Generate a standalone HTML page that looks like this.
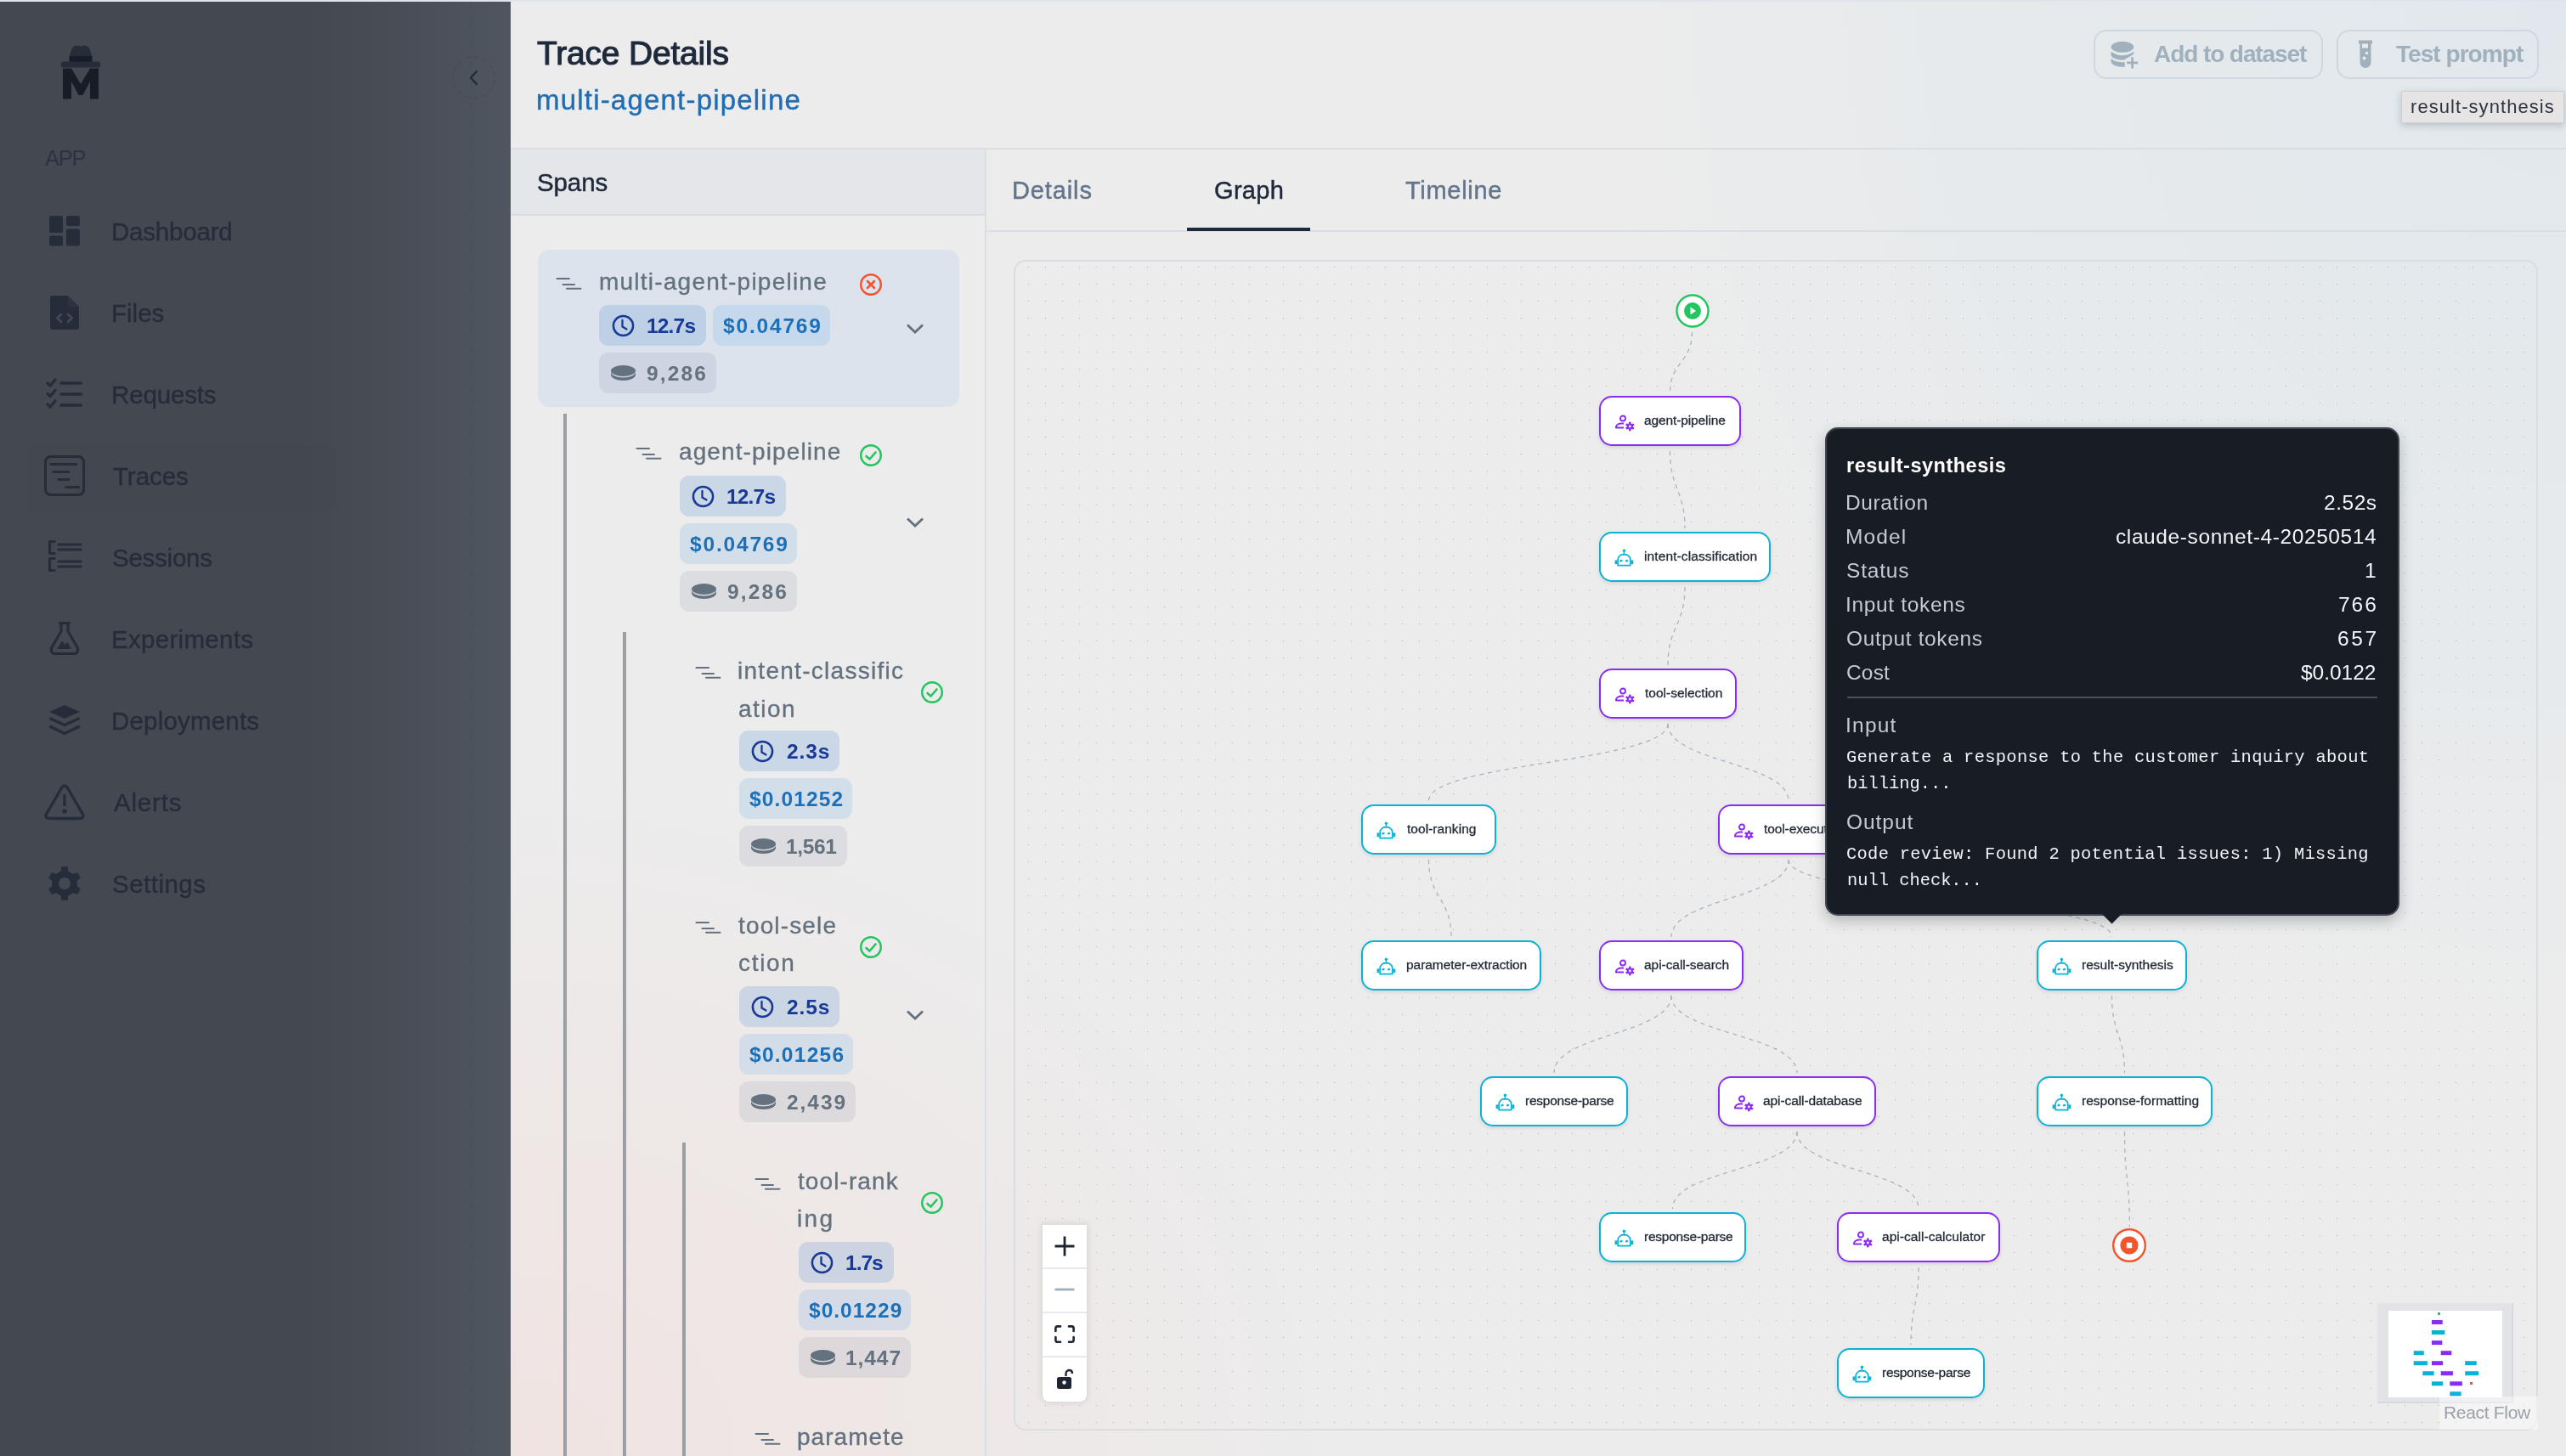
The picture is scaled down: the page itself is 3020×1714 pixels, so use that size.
<!DOCTYPE html>
<html><head><meta charset="utf-8"><title>Trace Details</title>
<style>
html,body{margin:0;padding:0;}
body{width:3020px;height:1714px;overflow:hidden;position:relative;background:#ececec;
font-family:"Liberation Sans",sans-serif;}
.t{position:absolute;white-space:nowrap;will-change:transform;}
.b{position:absolute;box-sizing:border-box;}
svg.b{overflow:visible;}
</style></head><body>

<div class="b" style="left:601px;top:0px;width:2419px;height:1714px;background:radial-gradient(ellipse 1000px 800px at 0% 100%,rgba(241,226,224,0.85),rgba(241,226,224,0) 100%),radial-gradient(ellipse 1150px 1250px at 100% 0%,rgba(225,232,237,1) 0%,rgba(225,232,237,0.55) 55%,rgba(225,232,237,0) 100%),#ececec;"></div>
<div class="b" style="left:0px;top:0px;width:3020px;height:2px;background:#dfe4ec;"></div>
<div class="b" style="left:0px;top:2px;width:601px;height:1712px;background:linear-gradient(to right,#434851 0px,#434851 360px,#474c55 450px,#4c525b 540px,#50565f 601px);"></div>
<div class="b" style="left:554px;top:2px;width:2px;height:1712px;background:repeating-linear-gradient(to bottom,rgba(40,46,56,0.09) 0 6px,transparent 6px 12px);"></div>
<div class="b" style="left:532px;top:66px;width:51px;height:51px;border:2px dashed rgba(40,46,56,0.12);border-radius:50%;"></div>
<svg class="b" style="left:550px;top:82px;" width="14" height="20" viewBox="0 0 14 20"><path d="M11 2 L4 9.5 L11 17" fill="none" stroke="#232b37" stroke-width="2.4" stroke-linecap="round" stroke-linejoin="round"/></svg>
<svg class="b" style="left:70px;top:52px;" width="50" height="66" viewBox="0 0 50 66"><path d="M12 21 C12 10 14 1.5 20.5 1.5 C23.5 1.5 24 2.8 25 2.8 C26 2.8 26.5 1.5 29.5 1.5 C36 1.5 38 10 38 21 Z" fill="#252d3a"/><rect x="11.5" y="14" width="27" height="7" fill="#161d27"/><path d="M4 20.5 L46 20.5 C49 20.5 49 27.5 46 27.5 L4 27.5 C1 27.5 1 20.5 4 20.5 Z" fill="#252d3a"/><path d="M4 28.5 L14 28.5 L25 47 L36 28.5 L46 28.5 L46 64.5 L36 64.5 L36 44 L27.5 60 L22.5 60 L14 44 L14 64.5 L4 64.5 Z" fill="#161d27"/></svg>
<div class="t" style="top:171.1px;font-size:25.5px;line-height:31px;color:#2b3340;letter-spacing:-1.21px;left:52.7px;">APP</div>
<div class="b" style="left:33px;top:523px;width:361px;height:80px;background:rgba(30,36,46,0.025);border-radius:12px;"></div>
<div class="t" style="top:254.6px;font-size:29.5px;line-height:35px;color:#252d3a;-webkit-text-stroke:0.35px #252d3a;letter-spacing:-0.20px;left:131.1px;">Dashboard</div>
<div class="t" style="top:350.6px;font-size:29.5px;line-height:35px;color:#252d3a;-webkit-text-stroke:0.35px #252d3a;letter-spacing:0.02px;left:131.1px;">Files</div>
<div class="t" style="top:446.6px;font-size:29.5px;line-height:35px;color:#252d3a;-webkit-text-stroke:0.35px #252d3a;letter-spacing:-0.16px;left:131.1px;">Requests</div>
<div class="t" style="top:542.6px;font-size:29.5px;line-height:35px;color:#252d3a;-webkit-text-stroke:0.35px #252d3a;letter-spacing:-0.06px;left:132.9px;">Traces</div>
<div class="t" style="top:638.6px;font-size:29.5px;line-height:35px;color:#252d3a;-webkit-text-stroke:0.35px #252d3a;letter-spacing:-0.25px;left:132.2px;">Sessions</div>
<div class="t" style="top:734.6px;font-size:29.5px;line-height:35px;color:#252d3a;-webkit-text-stroke:0.35px #252d3a;letter-spacing:0.30px;left:131.1px;">Experiments</div>
<div class="t" style="top:830.6px;font-size:29.5px;line-height:35px;color:#252d3a;-webkit-text-stroke:0.35px #252d3a;letter-spacing:0.19px;left:131.1px;">Deployments</div>
<div class="t" style="top:926.6px;font-size:29.5px;line-height:35px;color:#252d3a;-webkit-text-stroke:0.35px #252d3a;letter-spacing:0.80px;left:133.5px;">Alerts</div>
<div class="t" style="top:1022.6px;font-size:29.5px;line-height:35px;color:#252d3a;-webkit-text-stroke:0.35px #252d3a;letter-spacing:0.48px;left:132.2px;">Settings</div>
<svg class="b" style="left:57px;top:253px;" width="38" height="38" viewBox="0 0 38 38"><rect x="1" y="1" width="16" height="20" rx="2.5" fill="#252d3a"/><rect x="1" y="24.5" width="16" height="12" rx="2.5" fill="#252d3a"/><rect x="21" y="1" width="16" height="12" rx="2.5" fill="#252d3a"/><rect x="21" y="16.5" width="16" height="20" rx="2.5" fill="#252d3a"/></svg>
<svg class="b" style="left:58px;top:347px;" width="36" height="42" viewBox="0 0 36 42"><path d="M3 1 L22 1 L35 14 L35 38 C35 40 34 41 32 41 L4 41 C2 41 1 40 1 38 L1 4 C1 2 2 1 3 1 Z" fill="#252d3a"/><path d="M22 1 L22 14 L35 14" fill="#3c424b" opacity="0.35"/><path d="M14 23 L9.5 27.5 L14 32 M22 23 L26.5 27.5 L22 32" fill="none" stroke="#444951" stroke-width="2.6" stroke-linecap="round" stroke-linejoin="round"/></svg>
<svg class="b" style="left:54px;top:445px;" width="44" height="37" viewBox="0 0 44 37"><path d="M2 6 L5 9 L11 2 M2 18.5 L5 21.5 L11 14.5 M2 31 L5 34 L11 27" fill="none" stroke="#252d3a" stroke-width="3.4" stroke-linecap="round" stroke-linejoin="round"/><path d="M18 6 L41 6 M18 19 L41 19 M18 32 L41 32" stroke="#252d3a" stroke-width="3.6" stroke-linecap="round"/></svg>
<svg class="b" style="left:51px;top:535px;" width="50" height="50" viewBox="0 0 50 50"><rect x="2.5" y="2.5" width="45" height="45" rx="6" fill="none" stroke="#252d3a" stroke-width="3"/><path d="M7.5 11.5 L40 11.5 M10.5 20.5 L31 20.5 M16.5 29.5 L31 29.5 M25.5 38.5 L43 38.5" stroke="#252d3a" stroke-width="2.8"/></svg>
<svg class="b" style="left:55px;top:635px;" width="42" height="40" viewBox="0 0 42 40"><path d="M9 2.5 L3.5 2.5 L3.5 16.5 L9 16.5 M9 22.5 L3.5 22.5 L3.5 36.5 L9 36.5" fill="none" stroke="#252d3a" stroke-width="3.2" stroke-linecap="round" stroke-linejoin="round"/><path d="M14 6 L40 6 M14 12 L40 12 M14 26 L40 26 M14 32 L40 32" stroke="#252d3a" stroke-width="3.2" stroke-linecap="round"/></svg>
<svg class="b" style="left:57px;top:731px;" width="38" height="42" viewBox="0 0 38 42"><path d="M13.5 2.5 L24.5 2.5 M15 2.5 L15 12 L4 31 C2.5 34 3.5 38.5 8 38.5 L30 38.5 C34.5 38.5 35.5 34 34 31 L23 12 L23 2.5" fill="none" stroke="#252d3a" stroke-width="3.2" stroke-linecap="round" stroke-linejoin="round"/><path d="M10 33 L16 23.5 L19.5 28 L22 25 L27 33 Z" fill="#252d3a"/></svg>
<svg class="b" style="left:57px;top:829px;" width="38" height="38" viewBox="0 0 38 38"><path d="M19 1 L37 9 L19 17 L1 9 Z" fill="#252d3a"/><path d="M2.5 17 L19 24.5 L35.5 17" fill="none" stroke="#252d3a" stroke-width="3.4" stroke-linecap="round" stroke-linejoin="round"/><path d="M2.5 26.5 L19 34.5 L35.5 26.5" fill="none" stroke="#252d3a" stroke-width="3.4" stroke-linecap="round" stroke-linejoin="round"/></svg>
<svg class="b" style="left:51px;top:922px;" width="50" height="44" viewBox="0 0 50 44"><path d="M25 3 C23.5 3 22.5 4 21.5 5.5 L3.5 36.5 C2 39 3.5 41.5 6.5 41.5 L43.5 41.5 C46.5 41.5 48 39 46.5 36.5 L28.5 5.5 C27.5 4 26.5 3 25 3 Z" fill="none" stroke="#252d3a" stroke-width="3.4" stroke-linejoin="round"/><path d="M25 13 L25 27" stroke="#252d3a" stroke-width="3.4"/><circle cx="25" cy="33" r="2.6" fill="#252d3a"/></svg>
<svg class="b" style="left:56px;top:1020px;" width="40" height="40" viewBox="0 0 40 40"><polygon points="15.61,5.66 16.18,0.37 23.82,0.37 24.39,5.66 30.23,9.03 35.09,6.88 38.91,13.49 34.62,16.63 34.62,23.37 38.91,26.51 35.09,33.12 30.23,30.97 24.39,34.34 23.82,39.63 16.18,39.63 15.61,34.34 9.77,30.97 4.91,33.12 1.09,26.51 5.38,23.37 5.38,16.63 1.09,13.49 4.91,6.88 9.77,9.03" fill="#252d3a"/><circle cx="20" cy="20" r="14.5" fill="#252d3a"/><circle cx="20" cy="20" r="7" fill="#444951"/></svg>
<div class="t" style="top:38.6px;font-size:39px;line-height:47px;color:#1e293b;-webkit-text-stroke:1.1px #1e293b;letter-spacing:-0.19px;left:632.2px;">Trace Details</div>
<div class="t" style="top:98.3px;font-size:33px;line-height:40px;color:#1f6db4;-webkit-text-stroke:0.4px #1f6db4;letter-spacing:1.20px;left:630.9px;">multi-agent-pipeline</div>
<div class="b" style="left:2464px;top:35px;width:270px;height:58px;border:2px solid #cfd7e0;border-radius:15px;"></div>
<div class="b" style="left:2750px;top:35px;width:238px;height:58px;border:2px solid #cfd7e0;border-radius:15px;"></div>
<svg class="b" style="left:2483px;top:47px;" width="36" height="36" viewBox="0 0 36 36"><ellipse cx="14.9" cy="8.3" rx="13.3" ry="6.5" fill="#a1b0bd"/><path d="M1.6 13.8 Q14.9 22.8 28.2 13.8 L28.2 16.8 L18 22.8 C17 23.4 16 23.6 14.9 23.6 C7.5 23.6 1.6 20.8 1.6 17.5 Z" fill="#a1b0bd"/><path d="M1.6 21.8 C4 24.6 9 26 14 26.2 L17.8 26.3 L17.8 31.7 L14 31.7 C7 31.4 1.6 28.8 1.6 25.6 Z" fill="#a1b0bd"/><path d="M26.6 20.2 L26.6 33.6 M20.1 26.8 L33.2 26.8" stroke="#a1b0bd" stroke-width="2.7"/></svg>
<svg class="b" style="left:2774px;top:46px;" width="20" height="36" viewBox="0 0 20 36"><path d="M2 1.5 L18 1.5 L18 5.5 L16.5 5.5 L16.5 27 C16.5 31 13.5 34 10 34 C6.5 34 3.5 31 3.5 27 L3.5 5.5 L2 5.5 Z" fill="#a1b0bd"/><rect x="6" y="5.5" width="7" height="5" fill="#e8ecee"/><circle cx="11.5" cy="16.5" r="1.8" fill="#e8ecee"/><circle cx="8.5" cy="22.5" r="2" fill="#e8ecee"/></svg>
<div class="t" style="top:46.5px;font-size:28px;line-height:34px;color:#a1b0bd;font-weight:700;letter-spacing:-1.08px;left:2535.0px;">Add to dataset</div>
<div class="t" style="top:46.5px;font-size:28px;line-height:34px;color:#a1b0bd;font-weight:700;letter-spacing:-0.95px;left:2819.7px;">Test prompt</div>
<div class="b" style="left:2826px;top:107px;width:192px;height:38px;background:#e6e4e4;border:1px solid #cfcfd2;box-shadow:0 3px 8px rgba(40,50,70,0.22);"></div>
<div class="t" style="top:113.1px;font-size:22px;line-height:26px;color:#2d3540;letter-spacing:1.06px;left:2837.1px;">result-synthesis</div>
<div class="b" style="left:601px;top:174px;width:2419px;height:2px;background:#dadde2;"></div>
<div class="b" style="left:601px;top:176px;width:559px;height:77px;background:#e5e6e9;"></div>
<div class="b" style="left:601px;top:252px;width:559px;height:2px;background:#d9dde3;"></div>
<div class="b" style="left:1159px;top:175px;width:2px;height:1539px;background:#d9dee4;"></div>
<div class="t" style="top:197.0px;font-size:29.5px;line-height:35px;color:#1e293b;-webkit-text-stroke:0.5px #1e293b;letter-spacing:-0.12px;left:631.7px;">Spans</div>
<div class="b" style="left:633px;top:294px;width:496px;height:185px;background:#dde3ec;border-radius:14px;"></div>
<div class="b" style="left:663px;top:487px;width:4px;height:1227px;background:#9b9ea3;"></div>
<div class="b" style="left:733px;top:744px;width:4px;height:970px;background:#9b9ea3;"></div>
<div class="b" style="left:803px;top:1345px;width:4px;height:369px;background:#9b9ea3;"></div>
<svg class="b" style="left:655px;top:326.0px;" width="30" height="16" viewBox="0 0 30 16"><path d="M0.5 2 L15 2 M7.5 9 L21 9 M12 13.7 L28.5 13.7" stroke="#64717e" stroke-width="2" stroke-linecap="round"/></svg>
<div class="t" style="top:314.8px;font-size:28px;line-height:34px;color:#64717e;-webkit-text-stroke:0.35px #64717e;letter-spacing:1.23px;left:704.5px;">multi-agent-pipeline</div>
<svg class="b" style="left:1012px;top:322px;" width="26" height="26" viewBox="0 0 26 26"><circle cx="13" cy="13" r="11.8" fill="none" stroke="#f4532e" stroke-width="2.4"/><path d="M9 9 L17 17 M17 9 L9 17" stroke="#f4532e" stroke-width="2.6" stroke-linecap="round"/></svg>
<div class="b" style="left:705px;top:359px;width:125.5px;height:48px;background:rgba(71,136,211,0.2);border-radius:11px;"></div>
<svg class="b" style="left:719.5px;top:369.5px;" width="27" height="27" viewBox="0 0 27 27"><circle cx="13.5" cy="13.5" r="11.6" fill="none" stroke="#183a96" stroke-width="2.5"/><path d="M12.5 7 L12.5 14.5 L17.5 17.5" fill="none" stroke="#183a96" stroke-width="2.3" stroke-linecap="round"/></svg>
<div class="t" style="top:368.7px;font-size:24.5px;line-height:29px;color:#183a96;font-weight:700;letter-spacing:-0.82px;left:760.5px;">12.7s</div>
<div class="b" style="left:839px;top:359px;width:138.39999999999998px;height:48px;background:rgba(69,156,236,0.15);border-radius:11px;"></div>
<div class="t" style="top:368.7px;font-size:24.5px;line-height:29px;color:#1d70b8;font-weight:700;letter-spacing:1.82px;left:851.3px;">$0.04769</div>
<div class="b" style="left:705px;top:415px;width:138px;height:48px;background:rgba(76,86,126,0.1);border-radius:11px;"></div>
<svg class="b" style="left:718px;top:429px;" width="31" height="20" viewBox="0 0 31 20"><ellipse cx="15.5" cy="7.5" rx="14.5" ry="6.5" fill="#64717e"/><path d="M1 8.5 L1 12 C1 16 7.5 19 15.5 19 C23.5 19 30 16 30 12 L30 8.5 C30 12.5 23.5 15.5 15.5 15.5 C7.5 15.5 1 12.5 1 8.5 Z" fill="#64717e"/></svg>
<div class="t" style="top:425.0px;font-size:24.5px;line-height:29px;color:#64717e;font-weight:700;letter-spacing:2.12px;left:761.1px;">9,286</div>
<svg class="b" style="left:1066px;top:379.5px;" width="22" height="14" viewBox="0 0 22 14"><path d="M2 2.5 L11 11 L20 2.5" fill="none" stroke="#64707c" stroke-width="2.8"/></svg>
<svg class="b" style="left:748.5px;top:526.2px;" width="30" height="16" viewBox="0 0 30 16"><path d="M0.5 2 L15 2 M7.5 9 L21 9 M12 13.7 L28.5 13.7" stroke="#64717e" stroke-width="2" stroke-linecap="round"/></svg>
<div class="t" style="top:515.0px;font-size:28px;line-height:34px;color:#64717e;-webkit-text-stroke:0.35px #64717e;letter-spacing:1.11px;left:798.5px;">agent-pipeline</div>
<svg class="b" style="left:1012px;top:522.8px;" width="26" height="26" viewBox="0 0 26 26"><circle cx="13" cy="13" r="11.8" fill="none" stroke="#22c55e" stroke-width="2.4"/><path d="M7.5 14 L11.5 17.5 L18.5 9.5" fill="none" stroke="#22c55e" stroke-width="2.6" stroke-linecap="round" stroke-linejoin="round"/></svg>
<div class="b" style="left:799.6px;top:560px;width:125.5px;height:48px;background:rgba(71,136,211,0.2);border-radius:11px;"></div>
<svg class="b" style="left:814.1px;top:570.5px;" width="27" height="27" viewBox="0 0 27 27"><circle cx="13.5" cy="13.5" r="11.6" fill="none" stroke="#183a96" stroke-width="2.5"/><path d="M12.5 7 L12.5 14.5 L17.5 17.5" fill="none" stroke="#183a96" stroke-width="2.3" stroke-linecap="round"/></svg>
<div class="t" style="top:569.7px;font-size:24.5px;line-height:29px;color:#183a96;font-weight:700;letter-spacing:-0.82px;left:855.1px;">12.7s</div>
<div class="b" style="left:799.6px;top:616px;width:138.39999999999998px;height:48px;background:rgba(69,156,236,0.15);border-radius:11px;"></div>
<div class="t" style="top:625.7px;font-size:24.5px;line-height:29px;color:#1d70b8;font-weight:700;letter-spacing:1.82px;left:811.9px;">$0.04769</div>
<div class="b" style="left:799.6px;top:672px;width:138.0px;height:48px;background:rgba(76,86,126,0.1);border-radius:11px;"></div>
<svg class="b" style="left:812.6px;top:686px;" width="31" height="20" viewBox="0 0 31 20"><ellipse cx="15.5" cy="7.5" rx="14.5" ry="6.5" fill="#64717e"/><path d="M1 8.5 L1 12 C1 16 7.5 19 15.5 19 C23.5 19 30 16 30 12 L30 8.5 C30 12.5 23.5 15.5 15.5 15.5 C7.5 15.5 1 12.5 1 8.5 Z" fill="#64717e"/></svg>
<div class="t" style="top:682.0px;font-size:24.5px;line-height:29px;color:#64717e;font-weight:700;letter-spacing:2.12px;left:855.7px;">9,286</div>
<svg class="b" style="left:1066px;top:608.3px;" width="22" height="14" viewBox="0 0 22 14"><path d="M2 2.5 L11 11 L20 2.5" fill="none" stroke="#64707c" stroke-width="2.8"/></svg>
<svg class="b" style="left:818.5px;top:784.3px;" width="30" height="16" viewBox="0 0 30 16"><path d="M0.5 2 L15 2 M7.5 9 L21 9 M12 13.7 L28.5 13.7" stroke="#64717e" stroke-width="2" stroke-linecap="round"/></svg>
<div class="t" style="top:773.1px;font-size:28px;line-height:34px;color:#64717e;-webkit-text-stroke:0.35px #64717e;letter-spacing:1.28px;left:867.8px;">intent-classific</div>
<div class="t" style="top:817.6px;font-size:28px;line-height:34px;color:#64717e;-webkit-text-stroke:0.35px #64717e;letter-spacing:1.47px;left:868.5px;">ation</div>
<svg class="b" style="left:1084px;top:802px;" width="26" height="26" viewBox="0 0 26 26"><circle cx="13" cy="13" r="11.8" fill="none" stroke="#22c55e" stroke-width="2.4"/><path d="M7.5 14 L11.5 17.5 L18.5 9.5" fill="none" stroke="#22c55e" stroke-width="2.6" stroke-linecap="round" stroke-linejoin="round"/></svg>
<div class="b" style="left:869.6px;top:860px;width:118.39999999999998px;height:48px;background:rgba(71,136,211,0.2);border-radius:11px;"></div>
<svg class="b" style="left:884.1px;top:870.5px;" width="27" height="27" viewBox="0 0 27 27"><circle cx="13.5" cy="13.5" r="11.6" fill="none" stroke="#183a96" stroke-width="2.5"/><path d="M12.5 7 L12.5 14.5 L17.5 17.5" fill="none" stroke="#183a96" stroke-width="2.3" stroke-linecap="round"/></svg>
<div class="t" style="top:869.7px;font-size:24.5px;line-height:29px;color:#183a96;font-weight:700;letter-spacing:0.86px;left:925.7px;">2.3s</div>
<div class="b" style="left:869.6px;top:916px;width:133.5px;height:48px;background:rgba(69,156,236,0.15);border-radius:11px;"></div>
<div class="t" style="top:925.7px;font-size:24.5px;line-height:29px;color:#1d70b8;font-weight:700;letter-spacing:1.14px;left:881.9px;">$0.01252</div>
<div class="b" style="left:869.6px;top:972px;width:127.70000000000005px;height:48px;background:rgba(76,86,126,0.1);border-radius:11px;"></div>
<svg class="b" style="left:882.6px;top:986px;" width="31" height="20" viewBox="0 0 31 20"><ellipse cx="15.5" cy="7.5" rx="14.5" ry="6.5" fill="#64717e"/><path d="M1 8.5 L1 12 C1 16 7.5 19 15.5 19 C23.5 19 30 16 30 12 L30 8.5 C30 12.5 23.5 15.5 15.5 15.5 C7.5 15.5 1 12.5 1 8.5 Z" fill="#64717e"/></svg>
<div class="t" style="top:982.0px;font-size:24.5px;line-height:29px;color:#64717e;font-weight:700;letter-spacing:-0.37px;left:925.1px;">1,561</div>
<svg class="b" style="left:818.5px;top:1084.2px;" width="30" height="16" viewBox="0 0 30 16"><path d="M0.5 2 L15 2 M7.5 9 L21 9 M12 13.7 L28.5 13.7" stroke="#64717e" stroke-width="2" stroke-linecap="round"/></svg>
<div class="t" style="top:1073.0px;font-size:28px;line-height:34px;color:#64717e;-webkit-text-stroke:0.35px #64717e;letter-spacing:1.15px;left:869.2px;">tool-sele</div>
<div class="t" style="top:1116.8px;font-size:28px;line-height:34px;color:#64717e;-webkit-text-stroke:0.35px #64717e;letter-spacing:1.70px;left:868.5px;">ction</div>
<svg class="b" style="left:1012px;top:1102px;" width="26" height="26" viewBox="0 0 26 26"><circle cx="13" cy="13" r="11.8" fill="none" stroke="#22c55e" stroke-width="2.4"/><path d="M7.5 14 L11.5 17.5 L18.5 9.5" fill="none" stroke="#22c55e" stroke-width="2.6" stroke-linecap="round" stroke-linejoin="round"/></svg>
<div class="b" style="left:869.6px;top:1161px;width:118.39999999999998px;height:48px;background:rgba(71,136,211,0.2);border-radius:11px;"></div>
<svg class="b" style="left:884.1px;top:1171.5px;" width="27" height="27" viewBox="0 0 27 27"><circle cx="13.5" cy="13.5" r="11.6" fill="none" stroke="#183a96" stroke-width="2.5"/><path d="M12.5 7 L12.5 14.5 L17.5 17.5" fill="none" stroke="#183a96" stroke-width="2.3" stroke-linecap="round"/></svg>
<div class="t" style="top:1170.7px;font-size:24.5px;line-height:29px;color:#183a96;font-weight:700;letter-spacing:0.86px;left:925.7px;">2.5s</div>
<div class="b" style="left:869.6px;top:1217px;width:134.5px;height:48px;background:rgba(69,156,236,0.15);border-radius:11px;"></div>
<div class="t" style="top:1226.7px;font-size:24.5px;line-height:29px;color:#1d70b8;font-weight:700;letter-spacing:1.27px;left:881.9px;">$0.01256</div>
<div class="b" style="left:869.6px;top:1273px;width:137.39999999999998px;height:48px;background:rgba(76,86,126,0.1);border-radius:11px;"></div>
<svg class="b" style="left:882.6px;top:1287px;" width="31" height="20" viewBox="0 0 31 20"><ellipse cx="15.5" cy="7.5" rx="14.5" ry="6.5" fill="#64717e"/><path d="M1 8.5 L1 12 C1 16 7.5 19 15.5 19 C23.5 19 30 16 30 12 L30 8.5 C30 12.5 23.5 15.5 15.5 15.5 C7.5 15.5 1 12.5 1 8.5 Z" fill="#64717e"/></svg>
<div class="t" style="top:1283.0px;font-size:24.5px;line-height:29px;color:#64717e;font-weight:700;letter-spacing:1.97px;left:925.7px;">2,439</div>
<svg class="b" style="left:1066px;top:1188px;" width="22" height="14" viewBox="0 0 22 14"><path d="M2 2.5 L11 11 L20 2.5" fill="none" stroke="#64707c" stroke-width="2.8"/></svg>
<svg class="b" style="left:888.8px;top:1385.5px;" width="30" height="16" viewBox="0 0 30 16"><path d="M0.5 2 L15 2 M7.5 9 L21 9 M12 13.7 L28.5 13.7" stroke="#64717e" stroke-width="2" stroke-linecap="round"/></svg>
<div class="t" style="top:1374.3px;font-size:28px;line-height:34px;color:#64717e;-webkit-text-stroke:0.35px #64717e;letter-spacing:1.09px;left:939.3px;">tool-rank</div>
<div class="t" style="top:1418.0px;font-size:28px;line-height:34px;color:#64717e;-webkit-text-stroke:0.35px #64717e;letter-spacing:2.35px;left:937.9px;">ing</div>
<svg class="b" style="left:1084px;top:1403px;" width="26" height="26" viewBox="0 0 26 26"><circle cx="13" cy="13" r="11.8" fill="none" stroke="#22c55e" stroke-width="2.4"/><path d="M7.5 14 L11.5 17.5 L18.5 9.5" fill="none" stroke="#22c55e" stroke-width="2.6" stroke-linecap="round" stroke-linejoin="round"/></svg>
<div class="b" style="left:939.7px;top:1462px;width:112.20000000000005px;height:48px;background:rgba(71,136,211,0.2);border-radius:11px;"></div>
<svg class="b" style="left:954.2px;top:1472.5px;" width="27" height="27" viewBox="0 0 27 27"><circle cx="13.5" cy="13.5" r="11.6" fill="none" stroke="#183a96" stroke-width="2.5"/><path d="M12.5 7 L12.5 14.5 L17.5 17.5" fill="none" stroke="#183a96" stroke-width="2.3" stroke-linecap="round"/></svg>
<div class="t" style="top:1471.7px;font-size:24.5px;line-height:29px;color:#183a96;font-weight:700;letter-spacing:-1.00px;left:995.2px;">1.7s</div>
<div class="b" style="left:939.7px;top:1518px;width:132.70000000000005px;height:48px;background:rgba(69,156,236,0.15);border-radius:11px;"></div>
<div class="t" style="top:1527.7px;font-size:24.5px;line-height:29px;color:#1d70b8;font-weight:700;letter-spacing:1.01px;left:952.0px;">$0.01229</div>
<div class="b" style="left:939.7px;top:1574px;width:132.5px;height:48px;background:rgba(76,86,126,0.1);border-radius:11px;"></div>
<svg class="b" style="left:952.7px;top:1588px;" width="31" height="20" viewBox="0 0 31 20"><ellipse cx="15.5" cy="7.5" rx="14.5" ry="6.5" fill="#64717e"/><path d="M1 8.5 L1 12 C1 16 7.5 19 15.5 19 C23.5 19 30 16 30 12 L30 8.5 C30 12.5 23.5 15.5 15.5 15.5 C7.5 15.5 1 12.5 1 8.5 Z" fill="#64717e"/></svg>
<div class="t" style="top:1584.0px;font-size:24.5px;line-height:29px;color:#64717e;font-weight:700;letter-spacing:0.93px;left:995.2px;">1,447</div>
<svg class="b" style="left:888.8px;top:1685.9px;" width="30" height="16" viewBox="0 0 30 16"><path d="M0.5 2 L15 2 M7.5 9 L21 9 M12 13.7 L28.5 13.7" stroke="#64717e" stroke-width="2" stroke-linecap="round"/></svg>
<div class="t" style="top:1674.7px;font-size:28px;line-height:34px;color:#64717e;-webkit-text-stroke:0.35px #64717e;letter-spacing:1.05px;left:937.9px;">paramete</div>
<div class="t" style="top:207.4px;font-size:29px;line-height:35px;color:#64748b;-webkit-text-stroke:0.45px #64748b;letter-spacing:0.88px;left:1191.3px;">Details</div>
<div class="t" style="top:207.4px;font-size:29px;line-height:35px;color:#1e293b;-webkit-text-stroke:0.45px #1e293b;letter-spacing:0.32px;left:1429.0px;">Graph</div>
<div class="t" style="top:207.4px;font-size:29px;line-height:35px;color:#64748b;-webkit-text-stroke:0.45px #64748b;letter-spacing:0.71px;left:1654.0px;">Timeline</div>
<div class="b" style="left:1161px;top:271px;width:1859px;height:2px;background:#d9dee4;"></div>
<div class="b" style="left:1397px;top:268px;width:145px;height:4px;background:#1e293b;"></div>
<div class="b" style="left:1193px;top:306px;width:1794px;height:1378px;border:2px solid #dadee3;border-radius:14px;"></div>
<svg class="b" style="left:1195px;top:308px;" width="1790" height="1374" viewBox="0 0 1790 1374"><defs><pattern id="dots" x="-5" y="6" width="20" height="20" patternUnits="userSpaceOnUse"><rect x="-1" y="0" width="2" height="1" fill="#a9afb6"/></pattern></defs><rect x="0" y="0" width="1790" height="1374" fill="url(#dots)"/></svg>
<svg class="b" style="left:0;top:0" width="3020" height="1714"><g fill="none" stroke="#a8b4c0" stroke-width="1.3" stroke-dasharray="5 5"><path d="M1991.5 391.0 C1991.5 426.5 1965.5 426.5 1965.5 462.0"/><path d="M1965.5 531.0 C1965.5 576.5 1983.0 576.5 1983.0 622.0"/><path d="M1983.0 691.0 C1983.0 737.0 1963.0 737.0 1963.0 783.0"/><path d="M1963.0 852.0 C1963.0 897.5 1681.5 897.5 1681.5 943.0"/><path d="M1963.0 852.0 C1963.0 897.5 2105.0 897.5 2105.0 943.0"/><path d="M1681.5 1012.0 C1681.5 1057.5 1708.0 1057.5 1708.0 1103.0"/><path d="M2105.0 1012.0 C2105.0 1057.5 1967.0 1057.5 1967.0 1103.0"/><path d="M2105.0 1012.0 C2105.0 1057.5 2485.5 1057.5 2485.5 1103.0"/><path d="M1967.0 1172.0 C1967.0 1217.5 1829.0 1217.5 1829.0 1263.0"/><path d="M1967.0 1172.0 C1967.0 1217.5 2115.0 1217.5 2115.0 1263.0"/><path d="M2115.0 1332.0 C2115.0 1377.5 1968.5 1377.5 1968.5 1423.0"/><path d="M2115.0 1332.0 C2115.0 1377.5 2258.0 1377.5 2258.0 1423.0"/><path d="M2258.0 1492.0 C2258.0 1537.5 2249.0 1537.5 2249.0 1583.0"/><path d="M2485.5 1172.0 C2485.5 1217.5 2500.5 1217.5 2500.5 1263.0"/><path d="M2500.5 1332.0 C2500.5 1388.3 2506.4 1388.3 2506.4 1444.6"/></g></svg>
<div class="b" style="left:1882px;top:466px;width:167px;height:59px;background:#fff;border:2.2px solid #8b2cf5;border-radius:15px;box-shadow:0 2px 4px rgba(30,40,60,0.12);"></div>
<svg class="b" style="left:1900.5px;top:487.5px;" width="22" height="20" viewBox="0 0 22 20"><circle cx="9" cy="4.5" r="3" fill="none" stroke="#8b2cf5" stroke-width="1.9"/><path d="M10 10.5 L7.5 10.5 C4 10.5 1 12.5 1 14.5 L1 15.5 L10 15.5" fill="none" stroke="#8b2cf5" stroke-width="2" stroke-linejoin="round"/><circle cx="17.3" cy="14" r="3.5" fill="#8b2cf5"/><rect x="16" y="8.7" width="2.6" height="10.6" fill="#8b2cf5" transform="rotate(0 17.3 14)"/><rect x="16" y="8.7" width="2.6" height="10.6" fill="#8b2cf5" transform="rotate(60 17.3 14)"/><rect x="16" y="8.7" width="2.6" height="10.6" fill="#8b2cf5" transform="rotate(120 17.3 14)"/><circle cx="17.3" cy="14" r="1.4" fill="#fff"/></svg>
<div class="t" style="top:485.1px;font-size:15.5px;line-height:19px;color:#1f2733;letter-spacing:-0.12px;left:1935.4px;-webkit-text-stroke:0.3px #1f2733;">agent-pipeline</div>
<div class="b" style="left:1882px;top:626px;width:202px;height:59px;background:#fff;border:2.2px solid #0ab3d6;border-radius:15px;box-shadow:0 2px 4px rgba(30,40,60,0.12);"></div>
<svg class="b" style="left:1900px;top:645.5px;" width="22" height="21" viewBox="0 0 22 21"><circle cx="11.4" cy="2.2" r="1.7" fill="#0ab3d6"/><path d="M11.4 3 L11.4 6.6" stroke="#0ab3d6" stroke-width="1.6"/><path d="M4.1 19.6 L4.1 12.8 Q4.1 10 6.3 8.3 L8.2 6.8 L14.6 6.8 L16.5 8.3 Q18.8 10 18.8 12.8 L18.8 19.6 Z" fill="none" stroke="#0ab3d6" stroke-width="1.7" stroke-linejoin="round"/><rect x="0.6" y="13.4" width="2.8" height="4.8" fill="#0ab3d6"/><rect x="19.5" y="13.4" width="2.8" height="4.8" fill="#0ab3d6"/><ellipse cx="8" cy="14.2" rx="1.8" ry="1.25" fill="#0ab3d6" transform="rotate(-20 8 14.2)"/><ellipse cx="14.6" cy="14.2" rx="1.8" ry="1.25" fill="#0ab3d6" transform="rotate(-20 14.6 14.2)"/></svg>
<div class="t" style="top:645.1px;font-size:15.5px;line-height:19px;color:#1f2733;letter-spacing:0.11px;left:1935.0px;-webkit-text-stroke:0.3px #1f2733;">intent-classification</div>
<div class="b" style="left:1882px;top:787px;width:162px;height:59px;background:#fff;border:2.2px solid #8b2cf5;border-radius:15px;box-shadow:0 2px 4px rgba(30,40,60,0.12);"></div>
<svg class="b" style="left:1900.5px;top:808.5px;" width="22" height="20" viewBox="0 0 22 20"><circle cx="9" cy="4.5" r="3" fill="none" stroke="#8b2cf5" stroke-width="1.9"/><path d="M10 10.5 L7.5 10.5 C4 10.5 1 12.5 1 14.5 L1 15.5 L10 15.5" fill="none" stroke="#8b2cf5" stroke-width="2" stroke-linejoin="round"/><circle cx="17.3" cy="14" r="3.5" fill="#8b2cf5"/><rect x="16" y="8.7" width="2.6" height="10.6" fill="#8b2cf5" transform="rotate(0 17.3 14)"/><rect x="16" y="8.7" width="2.6" height="10.6" fill="#8b2cf5" transform="rotate(60 17.3 14)"/><rect x="16" y="8.7" width="2.6" height="10.6" fill="#8b2cf5" transform="rotate(120 17.3 14)"/><circle cx="17.3" cy="14" r="1.4" fill="#fff"/></svg>
<div class="t" style="top:806.1px;font-size:15.5px;line-height:19px;color:#1f2733;letter-spacing:0.00px;left:1935.8px;-webkit-text-stroke:0.3px #1f2733;">tool-selection</div>
<div class="b" style="left:1602px;top:947px;width:159px;height:59px;background:#fff;border:2.2px solid #0ab3d6;border-radius:15px;box-shadow:0 2px 4px rgba(30,40,60,0.12);"></div>
<svg class="b" style="left:1620px;top:966.5px;" width="22" height="21" viewBox="0 0 22 21"><circle cx="11.4" cy="2.2" r="1.7" fill="#0ab3d6"/><path d="M11.4 3 L11.4 6.6" stroke="#0ab3d6" stroke-width="1.6"/><path d="M4.1 19.6 L4.1 12.8 Q4.1 10 6.3 8.3 L8.2 6.8 L14.6 6.8 L16.5 8.3 Q18.8 10 18.8 12.8 L18.8 19.6 Z" fill="none" stroke="#0ab3d6" stroke-width="1.7" stroke-linejoin="round"/><rect x="0.6" y="13.4" width="2.8" height="4.8" fill="#0ab3d6"/><rect x="19.5" y="13.4" width="2.8" height="4.8" fill="#0ab3d6"/><ellipse cx="8" cy="14.2" rx="1.8" ry="1.25" fill="#0ab3d6" transform="rotate(-20 8 14.2)"/><ellipse cx="14.6" cy="14.2" rx="1.8" ry="1.25" fill="#0ab3d6" transform="rotate(-20 14.6 14.2)"/></svg>
<div class="t" style="top:966.1px;font-size:15.5px;line-height:19px;color:#1f2733;letter-spacing:0.04px;left:1655.8px;-webkit-text-stroke:0.3px #1f2733;">tool-ranking</div>
<div class="b" style="left:2022px;top:947px;width:166px;height:59px;background:#fff;border:2.2px solid #8b2cf5;border-radius:15px;box-shadow:0 2px 4px rgba(30,40,60,0.12);"></div>
<svg class="b" style="left:2040.5px;top:968.5px;" width="22" height="20" viewBox="0 0 22 20"><circle cx="9" cy="4.5" r="3" fill="none" stroke="#8b2cf5" stroke-width="1.9"/><path d="M10 10.5 L7.5 10.5 C4 10.5 1 12.5 1 14.5 L1 15.5 L10 15.5" fill="none" stroke="#8b2cf5" stroke-width="2" stroke-linejoin="round"/><circle cx="17.3" cy="14" r="3.5" fill="#8b2cf5"/><rect x="16" y="8.7" width="2.6" height="10.6" fill="#8b2cf5" transform="rotate(0 17.3 14)"/><rect x="16" y="8.7" width="2.6" height="10.6" fill="#8b2cf5" transform="rotate(60 17.3 14)"/><rect x="16" y="8.7" width="2.6" height="10.6" fill="#8b2cf5" transform="rotate(120 17.3 14)"/><circle cx="17.3" cy="14" r="1.4" fill="#fff"/></svg>
<div class="t" style="top:966.1px;font-size:15.5px;line-height:19px;color:#1f2733;letter-spacing:-0.10px;left:2075.8px;-webkit-text-stroke:0.3px #1f2733;">tool-execution</div>
<div class="b" style="left:1602px;top:1107px;width:212px;height:59px;background:#fff;border:2.2px solid #0ab3d6;border-radius:15px;box-shadow:0 2px 4px rgba(30,40,60,0.12);"></div>
<svg class="b" style="left:1620px;top:1126.5px;" width="22" height="21" viewBox="0 0 22 21"><circle cx="11.4" cy="2.2" r="1.7" fill="#0ab3d6"/><path d="M11.4 3 L11.4 6.6" stroke="#0ab3d6" stroke-width="1.6"/><path d="M4.1 19.6 L4.1 12.8 Q4.1 10 6.3 8.3 L8.2 6.8 L14.6 6.8 L16.5 8.3 Q18.8 10 18.8 12.8 L18.8 19.6 Z" fill="none" stroke="#0ab3d6" stroke-width="1.7" stroke-linejoin="round"/><rect x="0.6" y="13.4" width="2.8" height="4.8" fill="#0ab3d6"/><rect x="19.5" y="13.4" width="2.8" height="4.8" fill="#0ab3d6"/><ellipse cx="8" cy="14.2" rx="1.8" ry="1.25" fill="#0ab3d6" transform="rotate(-20 8 14.2)"/><ellipse cx="14.6" cy="14.2" rx="1.8" ry="1.25" fill="#0ab3d6" transform="rotate(-20 14.6 14.2)"/></svg>
<div class="t" style="top:1126.1px;font-size:15.5px;line-height:19px;color:#1f2733;letter-spacing:-0.04px;left:1655.0px;-webkit-text-stroke:0.3px #1f2733;">parameter-extraction</div>
<div class="b" style="left:1882px;top:1107px;width:170px;height:59px;background:#fff;border:2.2px solid #8b2cf5;border-radius:15px;box-shadow:0 2px 4px rgba(30,40,60,0.12);"></div>
<svg class="b" style="left:1900.5px;top:1128.5px;" width="22" height="20" viewBox="0 0 22 20"><circle cx="9" cy="4.5" r="3" fill="none" stroke="#8b2cf5" stroke-width="1.9"/><path d="M10 10.5 L7.5 10.5 C4 10.5 1 12.5 1 14.5 L1 15.5 L10 15.5" fill="none" stroke="#8b2cf5" stroke-width="2" stroke-linejoin="round"/><circle cx="17.3" cy="14" r="3.5" fill="#8b2cf5"/><rect x="16" y="8.7" width="2.6" height="10.6" fill="#8b2cf5" transform="rotate(0 17.3 14)"/><rect x="16" y="8.7" width="2.6" height="10.6" fill="#8b2cf5" transform="rotate(60 17.3 14)"/><rect x="16" y="8.7" width="2.6" height="10.6" fill="#8b2cf5" transform="rotate(120 17.3 14)"/><circle cx="17.3" cy="14" r="1.4" fill="#fff"/></svg>
<div class="t" style="top:1126.1px;font-size:15.5px;line-height:19px;color:#1f2733;letter-spacing:-0.05px;left:1935.4px;-webkit-text-stroke:0.3px #1f2733;">api-call-search</div>
<div class="b" style="left:2397px;top:1107px;width:177px;height:59px;background:#fff;border:2.2px solid #0ab3d6;border-radius:15px;box-shadow:0 2px 4px rgba(30,40,60,0.12);"></div>
<svg class="b" style="left:2415px;top:1126.5px;" width="22" height="21" viewBox="0 0 22 21"><circle cx="11.4" cy="2.2" r="1.7" fill="#0ab3d6"/><path d="M11.4 3 L11.4 6.6" stroke="#0ab3d6" stroke-width="1.6"/><path d="M4.1 19.6 L4.1 12.8 Q4.1 10 6.3 8.3 L8.2 6.8 L14.6 6.8 L16.5 8.3 Q18.8 10 18.8 12.8 L18.8 19.6 Z" fill="none" stroke="#0ab3d6" stroke-width="1.7" stroke-linejoin="round"/><rect x="0.6" y="13.4" width="2.8" height="4.8" fill="#0ab3d6"/><rect x="19.5" y="13.4" width="2.8" height="4.8" fill="#0ab3d6"/><ellipse cx="8" cy="14.2" rx="1.8" ry="1.25" fill="#0ab3d6" transform="rotate(-20 8 14.2)"/><ellipse cx="14.6" cy="14.2" rx="1.8" ry="1.25" fill="#0ab3d6" transform="rotate(-20 14.6 14.2)"/></svg>
<div class="t" style="top:1126.1px;font-size:15.5px;line-height:19px;color:#1f2733;letter-spacing:0.01px;left:2450.0px;-webkit-text-stroke:0.3px #1f2733;">result-synthesis</div>
<div class="b" style="left:1742px;top:1267px;width:174px;height:59px;background:#fff;border:2.2px solid #0ab3d6;border-radius:15px;box-shadow:0 2px 4px rgba(30,40,60,0.12);"></div>
<svg class="b" style="left:1760px;top:1286.5px;" width="22" height="21" viewBox="0 0 22 21"><circle cx="11.4" cy="2.2" r="1.7" fill="#0ab3d6"/><path d="M11.4 3 L11.4 6.6" stroke="#0ab3d6" stroke-width="1.6"/><path d="M4.1 19.6 L4.1 12.8 Q4.1 10 6.3 8.3 L8.2 6.8 L14.6 6.8 L16.5 8.3 Q18.8 10 18.8 12.8 L18.8 19.6 Z" fill="none" stroke="#0ab3d6" stroke-width="1.7" stroke-linejoin="round"/><rect x="0.6" y="13.4" width="2.8" height="4.8" fill="#0ab3d6"/><rect x="19.5" y="13.4" width="2.8" height="4.8" fill="#0ab3d6"/><ellipse cx="8" cy="14.2" rx="1.8" ry="1.25" fill="#0ab3d6" transform="rotate(-20 8 14.2)"/><ellipse cx="14.6" cy="14.2" rx="1.8" ry="1.25" fill="#0ab3d6" transform="rotate(-20 14.6 14.2)"/></svg>
<div class="t" style="top:1286.1px;font-size:15.5px;line-height:19px;color:#1f2733;letter-spacing:-0.23px;left:1795.0px;-webkit-text-stroke:0.3px #1f2733;">response-parse</div>
<div class="b" style="left:2022px;top:1267px;width:186px;height:59px;background:#fff;border:2.2px solid #8b2cf5;border-radius:15px;box-shadow:0 2px 4px rgba(30,40,60,0.12);"></div>
<svg class="b" style="left:2040.5px;top:1288.5px;" width="22" height="20" viewBox="0 0 22 20"><circle cx="9" cy="4.5" r="3" fill="none" stroke="#8b2cf5" stroke-width="1.9"/><path d="M10 10.5 L7.5 10.5 C4 10.5 1 12.5 1 14.5 L1 15.5 L10 15.5" fill="none" stroke="#8b2cf5" stroke-width="2" stroke-linejoin="round"/><circle cx="17.3" cy="14" r="3.5" fill="#8b2cf5"/><rect x="16" y="8.7" width="2.6" height="10.6" fill="#8b2cf5" transform="rotate(0 17.3 14)"/><rect x="16" y="8.7" width="2.6" height="10.6" fill="#8b2cf5" transform="rotate(60 17.3 14)"/><rect x="16" y="8.7" width="2.6" height="10.6" fill="#8b2cf5" transform="rotate(120 17.3 14)"/><circle cx="17.3" cy="14" r="1.4" fill="#fff"/></svg>
<div class="t" style="top:1286.1px;font-size:15.5px;line-height:19px;color:#1f2733;letter-spacing:-0.09px;left:2075.4px;-webkit-text-stroke:0.3px #1f2733;">api-call-database</div>
<div class="b" style="left:2397px;top:1267px;width:207px;height:59px;background:#fff;border:2.2px solid #0ab3d6;border-radius:15px;box-shadow:0 2px 4px rgba(30,40,60,0.12);"></div>
<svg class="b" style="left:2415px;top:1286.5px;" width="22" height="21" viewBox="0 0 22 21"><circle cx="11.4" cy="2.2" r="1.7" fill="#0ab3d6"/><path d="M11.4 3 L11.4 6.6" stroke="#0ab3d6" stroke-width="1.6"/><path d="M4.1 19.6 L4.1 12.8 Q4.1 10 6.3 8.3 L8.2 6.8 L14.6 6.8 L16.5 8.3 Q18.8 10 18.8 12.8 L18.8 19.6 Z" fill="none" stroke="#0ab3d6" stroke-width="1.7" stroke-linejoin="round"/><rect x="0.6" y="13.4" width="2.8" height="4.8" fill="#0ab3d6"/><rect x="19.5" y="13.4" width="2.8" height="4.8" fill="#0ab3d6"/><ellipse cx="8" cy="14.2" rx="1.8" ry="1.25" fill="#0ab3d6" transform="rotate(-20 8 14.2)"/><ellipse cx="14.6" cy="14.2" rx="1.8" ry="1.25" fill="#0ab3d6" transform="rotate(-20 14.6 14.2)"/></svg>
<div class="t" style="top:1286.1px;font-size:15.5px;line-height:19px;color:#1f2733;letter-spacing:0.01px;left:2450.0px;-webkit-text-stroke:0.3px #1f2733;">response-formatting</div>
<div class="b" style="left:1882px;top:1427px;width:173px;height:59px;background:#fff;border:2.2px solid #0ab3d6;border-radius:15px;box-shadow:0 2px 4px rgba(30,40,60,0.12);"></div>
<svg class="b" style="left:1900px;top:1446.5px;" width="22" height="21" viewBox="0 0 22 21"><circle cx="11.4" cy="2.2" r="1.7" fill="#0ab3d6"/><path d="M11.4 3 L11.4 6.6" stroke="#0ab3d6" stroke-width="1.6"/><path d="M4.1 19.6 L4.1 12.8 Q4.1 10 6.3 8.3 L8.2 6.8 L14.6 6.8 L16.5 8.3 Q18.8 10 18.8 12.8 L18.8 19.6 Z" fill="none" stroke="#0ab3d6" stroke-width="1.7" stroke-linejoin="round"/><rect x="0.6" y="13.4" width="2.8" height="4.8" fill="#0ab3d6"/><rect x="19.5" y="13.4" width="2.8" height="4.8" fill="#0ab3d6"/><ellipse cx="8" cy="14.2" rx="1.8" ry="1.25" fill="#0ab3d6" transform="rotate(-20 8 14.2)"/><ellipse cx="14.6" cy="14.2" rx="1.8" ry="1.25" fill="#0ab3d6" transform="rotate(-20 14.6 14.2)"/></svg>
<div class="t" style="top:1446.1px;font-size:15.5px;line-height:19px;color:#1f2733;letter-spacing:-0.23px;left:1935.0px;-webkit-text-stroke:0.3px #1f2733;">response-parse</div>
<div class="b" style="left:2162px;top:1427px;width:192px;height:59px;background:#fff;border:2.2px solid #8b2cf5;border-radius:15px;box-shadow:0 2px 4px rgba(30,40,60,0.12);"></div>
<svg class="b" style="left:2180.5px;top:1448.5px;" width="22" height="20" viewBox="0 0 22 20"><circle cx="9" cy="4.5" r="3" fill="none" stroke="#8b2cf5" stroke-width="1.9"/><path d="M10 10.5 L7.5 10.5 C4 10.5 1 12.5 1 14.5 L1 15.5 L10 15.5" fill="none" stroke="#8b2cf5" stroke-width="2" stroke-linejoin="round"/><circle cx="17.3" cy="14" r="3.5" fill="#8b2cf5"/><rect x="16" y="8.7" width="2.6" height="10.6" fill="#8b2cf5" transform="rotate(0 17.3 14)"/><rect x="16" y="8.7" width="2.6" height="10.6" fill="#8b2cf5" transform="rotate(60 17.3 14)"/><rect x="16" y="8.7" width="2.6" height="10.6" fill="#8b2cf5" transform="rotate(120 17.3 14)"/><circle cx="17.3" cy="14" r="1.4" fill="#fff"/></svg>
<div class="t" style="top:1446.1px;font-size:15.5px;line-height:19px;color:#1f2733;letter-spacing:0.04px;left:2215.4px;-webkit-text-stroke:0.3px #1f2733;">api-call-calculator</div>
<div class="b" style="left:2162px;top:1587px;width:174px;height:59px;background:#fff;border:2.2px solid #0ab3d6;border-radius:15px;box-shadow:0 2px 4px rgba(30,40,60,0.12);"></div>
<svg class="b" style="left:2180px;top:1606.5px;" width="22" height="21" viewBox="0 0 22 21"><circle cx="11.4" cy="2.2" r="1.7" fill="#0ab3d6"/><path d="M11.4 3 L11.4 6.6" stroke="#0ab3d6" stroke-width="1.6"/><path d="M4.1 19.6 L4.1 12.8 Q4.1 10 6.3 8.3 L8.2 6.8 L14.6 6.8 L16.5 8.3 Q18.8 10 18.8 12.8 L18.8 19.6 Z" fill="none" stroke="#0ab3d6" stroke-width="1.7" stroke-linejoin="round"/><rect x="0.6" y="13.4" width="2.8" height="4.8" fill="#0ab3d6"/><rect x="19.5" y="13.4" width="2.8" height="4.8" fill="#0ab3d6"/><ellipse cx="8" cy="14.2" rx="1.8" ry="1.25" fill="#0ab3d6" transform="rotate(-20 8 14.2)"/><ellipse cx="14.6" cy="14.2" rx="1.8" ry="1.25" fill="#0ab3d6" transform="rotate(-20 14.6 14.2)"/></svg>
<div class="t" style="top:1606.1px;font-size:15.5px;line-height:19px;color:#1f2733;letter-spacing:-0.26px;left:2215.0px;-webkit-text-stroke:0.3px #1f2733;">response-parse</div>
<svg class="b" style="left:1970.5px;top:345px;" width="42" height="42" viewBox="0 0 42 42"><circle cx="21" cy="21" r="18.5" fill="#fff" stroke="#22c55e" stroke-width="2.4"/><circle cx="21" cy="21" r="10" fill="#22c55e"/><path d="M18.5 16.5 L25 21 L18.5 25.5 Z" fill="#fff"/></svg>
<svg class="b" style="left:2485.4px;top:1444.6px;" width="42" height="42" viewBox="0 0 42 42"><circle cx="21" cy="21" r="18.8" fill="#fff" stroke="#f2552c" stroke-width="2.4"/><circle cx="21" cy="21" r="10.6" fill="#f2552c"/><rect x="17.8" y="17.8" width="6.4" height="6.4" fill="#fff"/></svg>
<div class="b" style="left:1227px;top:1442px;width:52px;height:208px;background:#fff;border-radius:1px 1px 8px 8px;box-shadow:0 0 6px 2px rgba(40,50,70,0.10);"></div>
<div class="b" style="left:1227px;top:1492px;width:52px;height:2px;background:#e8eaed;"></div>
<div class="b" style="left:1227px;top:1544px;width:52px;height:2px;background:#e8eaed;"></div>
<div class="b" style="left:1227px;top:1596px;width:52px;height:2px;background:#e8eaed;"></div>
<svg class="b" style="left:1240px;top:1454px;" width="26" height="26" viewBox="0 0 26 26"><path d="M13 1.5 L13 24.5 M1.5 13 L24.5 13" stroke="#1e2632" stroke-width="2.8"/></svg>
<svg class="b" style="left:1240px;top:1512px;" width="26" height="12" viewBox="0 0 26 12"><path d="M1.5 6 L24.5 6" stroke="#a3adb8" stroke-width="2.8"/></svg>
<svg class="b" style="left:1241px;top:1560px;" width="24" height="22" viewBox="0 0 24 22"><path d="M1.4 7 L1.4 3.6 Q1.4 1.4 3.6 1.4 L7 1.4 M17 1.4 L20.4 1.4 Q22.6 1.4 22.6 3.6 L22.6 7 M22.6 14 L22.6 17.6 Q22.6 19.8 20.4 19.8 L17 19.8 M7 19.8 L3.6 19.8 Q1.4 19.8 1.4 17.6 L1.4 14" fill="none" stroke="#1e2632" stroke-width="2.6" stroke-linecap="round"/></svg>
<svg class="b" style="left:1242px;top:1611px;" width="22" height="26" viewBox="0 0 22 26"><path d="M12.5 9 L12.5 6 C12.5 3.5 14.5 2 16.5 2 C18.5 2 20 3.5 20 6" fill="none" stroke="#1e2632" stroke-width="2.4"/><rect x="2" y="10" width="17" height="14" rx="2.5" fill="#1e2632"/><circle cx="10.5" cy="16.5" r="2.2" fill="#fff"/></svg>
<div class="b" style="left:2798px;top:1534px;width:160px;height:118px;background:#e2e3e7;border-right:2px solid #d5d8de;border-bottom:2px solid #d5d8de;"></div>
<div class="b" style="left:2811px;top:1543px;width:134px;height:102px;background:#fff;"></div>
<svg class="b" style="left:2798px;top:1534px;" width="160" height="118" viewBox="0 0 160 118"><rect x="64.0" y="20.0" width="12.7" height="5" fill="#8b2cf5"/><rect x="64.0" y="32.0" width="15.4" height="5" fill="#0ab3d6"/><rect x="64.0" y="44.1" width="12.3" height="5" fill="#8b2cf5"/><rect x="42.7" y="56.2" width="12.1" height="5" fill="#0ab3d6"/><rect x="74.7" y="56.2" width="12.6" height="5" fill="#8b2cf5"/><rect x="42.7" y="68.2" width="16.2" height="5" fill="#0ab3d6"/><rect x="64.0" y="68.2" width="13.0" height="5" fill="#8b2cf5"/><rect x="103.2" y="68.2" width="13.5" height="5" fill="#0ab3d6"/><rect x="53.3" y="80.2" width="13.3" height="5" fill="#0ab3d6"/><rect x="74.7" y="80.2" width="14.2" height="5" fill="#8b2cf5"/><rect x="103.2" y="80.2" width="15.8" height="5" fill="#0ab3d6"/><rect x="64.0" y="92.3" width="13.2" height="5" fill="#0ab3d6"/><rect x="85.3" y="92.3" width="14.6" height="5" fill="#8b2cf5"/><rect x="85.3" y="104.3" width="13.3" height="5" fill="#0ab3d6"/><rect x="71" y="11" width="3" height="3" fill="#22c55e"/><rect x="109" y="93" width="3" height="3" fill="#f2552c"/></svg>
<div class="b" style="left:2871px;top:1644px;width:116px;height:39px;background:rgba(255,255,255,0.45);"></div>
<div class="t" style="top:1650.4px;font-size:21px;line-height:25px;color:#9aa0a8;letter-spacing:-0.32px;left:2876.3px;">React Flow</div>
<div class="b" style="left:2148px;top:503px;width:676px;height:575px;background:#171c25;border:2px solid #40474f;border-radius:15px;box-shadow:0 6px 16px rgba(20,25,35,0.25);"></div>
<svg class="b" style="left:2474px;top:1076px;" width="23" height="12" viewBox="0 0 23 12"><path d="M0 0 L23 0 L11.5 11.5 Z" fill="#171c25"/></svg>
<div class="t" style="top:534.3px;font-size:23.5px;line-height:28px;color:#ffffff;font-weight:700;letter-spacing:0.51px;left:2172.8px;">result-synthesis</div>
<div class="t" style="top:577.0px;font-size:24.5px;line-height:29px;color:#c5cbd3;letter-spacing:0.63px;left:2172.3px;">Duration</div>
<div class="t" style="top:577.0px;font-size:24.5px;line-height:29px;color:#f3f5f8;letter-spacing:0.54px;right:222.7px;text-align:right;">2.52s</div>
<div class="t" style="top:617.2px;font-size:24.5px;line-height:29px;color:#c5cbd3;letter-spacing:1.10px;left:2172.3px;">Model</div>
<div class="t" style="top:617.2px;font-size:24.5px;line-height:29px;color:#f3f5f8;letter-spacing:0.60px;right:222.6px;text-align:right;">claude-sonnet-4-20250514</div>
<div class="t" style="top:657.4px;font-size:24.5px;line-height:29px;color:#c5cbd3;letter-spacing:0.80px;left:2173.2px;">Status</div>
<div class="t" style="top:657.4px;font-size:24.5px;line-height:29px;color:#f3f5f8;right:223.2px;text-align:right;">1</div>
<div class="t" style="top:697.2px;font-size:24.5px;line-height:29px;color:#c5cbd3;letter-spacing:0.66px;left:2172.1px;">Input tokens</div>
<div class="t" style="top:697.2px;font-size:24.5px;line-height:29px;color:#f3f5f8;letter-spacing:1.96px;right:221.2px;text-align:right;">766</div>
<div class="t" style="top:736.8px;font-size:24.5px;line-height:29px;color:#c5cbd3;letter-spacing:0.62px;left:2173.2px;">Output tokens</div>
<div class="t" style="top:736.8px;font-size:24.5px;line-height:29px;color:#f3f5f8;letter-spacing:2.58px;right:220.6px;text-align:right;">657</div>
<div class="t" style="top:777.0px;font-size:24.5px;line-height:29px;color:#c5cbd3;letter-spacing:0.17px;left:2173.1px;">Cost</div>
<div class="t" style="top:777.0px;font-size:24.5px;line-height:29px;color:#f3f5f8;letter-spacing:-0.02px;right:223.2px;text-align:right;">$0.0122</div>
<div class="b" style="left:2174px;top:820px;width:624px;height:2px;background:#4a515b;"></div>
<div class="t" style="top:839.0px;font-size:24.5px;line-height:29px;color:#c5cbd3;letter-spacing:1.23px;left:2172.1px;">Input</div>
<div class="t" style="top:879.6px;font-size:20.4px;line-height:24px;color:#f1f3f6;font-family:'Liberation Mono',monospace;letter-spacing:0.32px;left:2173.2px;">Generate a response to the customer inquiry about</div>
<div class="t" style="top:910.6px;font-size:20.4px;line-height:24px;color:#f1f3f6;font-family:'Liberation Mono',monospace;left:2174.3px;">billing...</div>
<div class="t" style="top:953.3px;font-size:24.5px;line-height:29px;color:#c5cbd3;letter-spacing:0.94px;left:2173.2px;">Output</div>
<div class="t" style="top:993.6px;font-size:20.4px;line-height:24px;color:#f1f3f6;font-family:'Liberation Mono',monospace;letter-spacing:0.31px;left:2173.2px;">Code review: Found 2 potential issues: 1) Missing</div>
<div class="t" style="top:1025.3px;font-size:20.4px;line-height:24px;color:#f1f3f6;font-family:'Liberation Mono',monospace;left:2174.3px;">null check...</div>
</body></html>
